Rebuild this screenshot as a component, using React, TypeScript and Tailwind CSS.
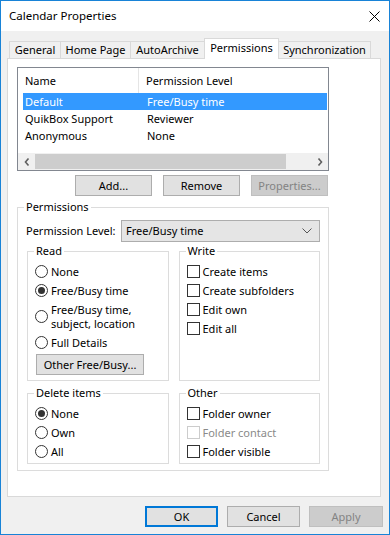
import React from 'react'

function Radio({ checked }: { checked?: boolean }) {
  return (
    <span className="w-[13px] h-[13px] rounded-full border border-[#333333] bg-white flex items-center justify-center shrink-0">
      {checked && <span className="w-[7px] h-[7px] rounded-full bg-[#333333]" />}
    </span>
  )
}

function Check({ disabled }: { disabled?: boolean }) {
  return (
    <span
      className={
        disabled
          ? 'w-[13px] h-[13px] border border-[#cccccc] bg-white shrink-0'
          : 'w-[13px] h-[13px] border border-[#333333] bg-white shrink-0'
      }
    />
  )
}

function RadioRow({ label, checked }: { label: string, checked?: boolean }) {
  return (
    <div className="h-[19px] flex items-center gap-[3px]">
      <Radio checked={checked} />
      <span>{label}</span>
    </div>
  )
}

function CheckRow({ label, disabled }: { label: string, disabled?: boolean }) {
  return (
    <div className="h-[19px] flex items-center gap-[3px]">
      <Check disabled={disabled} />
      <span className={disabled ? 'text-[#8a8a8a]' : ''}>{label}</span>
    </div>
  )
}

function Group({ title, children, className = '' }: { title: string, children: React.ReactNode, className?: string }) {
  return (
    <fieldset className={`border border-[#dcdcdc] m-0 p-0 min-w-0 ${className}`}>
      <legend className="ml-[6px] px-[2px] leading-[16px]">{title}</legend>
      {children}
    </fieldset>
  )
}

function Btn({ children, w = 'w-[77px]', disabled }: { children: React.ReactNode, w?: string, disabled?: boolean }) {
  return (
    <div
      className={
        disabled
          ? `${w} h-[21px] flex items-center justify-center bg-[#cccccc] border border-[#bfbfbf] text-[#838383]`
          : `${w} h-[21px] flex items-center justify-center bg-[#e1e1e1] border border-[#adadad]`
      }
    >
      {children}
    </div>
  )
}

const tabs = [
  { label: 'General', w: 'w-[51px]' },
  { label: 'Home Page', w: 'w-[70px]' },
  { label: 'AutoArchive', w: 'w-[74px]' },
]

export default function App() {
  return (
    <div className="w-[390px] h-[535px] border border-[#1883d7] bg-[#f0f0f0] flex flex-col font-['Noto_Sans',sans-serif] text-[11px] text-black leading-[16px]">
      {/* title bar */}
      <div className="h-[30px] bg-white flex items-center justify-between pl-[8px] pr-[9px] shrink-0">
        <span className="text-[11.5px]">Calendar Properties</span>
        <svg width="11" height="11" viewBox="0 0 11 11">
          <path d="M0.5 0.5 L10.5 10.5 M10.5 0.5 L0.5 10.5" stroke="#000" strokeWidth="1" />
        </svg>
      </div>

      <div className="flex-1 flex flex-col pl-[6px] pr-[8px] pt-[7px]">
        {/* tabs */}
        <div className="h-[20px] flex items-end ml-[2px]">
          {tabs.map(t => (
            <div key={t.label} className={`${t.w} h-[17px] border-l border-t border-[#d9d9d9] flex items-center justify-center`}>
              {t.label}
            </div>
          ))}
          <div className="w-[75px] h-[21px] -mb-px relative z-10 bg-white border-l border-t border-r border-[#d9d9d9] flex items-start justify-center pt-[1px]">
            Permissions
          </div>
          <div className="w-[92px] h-[17px] border-t border-r border-[#d9d9d9] flex items-center justify-center">
            Synchronization
          </div>
        </div>

        {/* panel */}
        <div className="h-[439px] bg-white border border-[#d9d9d9] pt-[8px] pl-[9px] flex flex-col shrink-0">
          {/* list view */}
          <div className="w-[312px] h-[104px] border border-[#828790] bg-white flex flex-col">
            <div className="h-[25px] flex items-center">
              <div className="w-[121px] h-full flex items-center pl-[7px] border-r border-[#e5e5e5]">Name</div>
              <div className="pl-[7px]">Permission Level</div>
            </div>
            <div className="flex flex-col pl-[5px] pr-[1px]">
              <div className="h-[17px] flex items-center bg-[#3399ff] text-white">
                <span className="w-[116px] pl-[2px]">Default</span>
                <span className="pl-[8px]">Free/Busy time</span>
              </div>
              <div className="h-[17px] flex items-center">
                <span className="w-[116px] pl-[2px]">QuikBox Support</span>
                <span className="pl-[8px]">Reviewer</span>
              </div>
              <div className="h-[17px] flex items-center">
                <span className="w-[116px] pl-[2px]">Anonymous</span>
                <span className="pl-[8px]">None</span>
              </div>
            </div>
            <div className="flex-1" />
            <div className="h-[17px] bg-[#f0f0f0] flex items-center">
              <div className="w-[17px] h-full flex items-center justify-center">
                <svg width="6" height="8" viewBox="0 0 6 8">
                  <path d="M4.5 0.5 L1.5 4 L4.5 7.5" stroke="#606060" strokeWidth="1.6" fill="none" />
                </svg>
              </div>
              <div className="w-[251px] h-[15px] bg-[#cdcdcd]" />
              <div className="flex-1" />
              <div className="w-[17px] h-full flex items-center justify-center">
                <svg width="6" height="8" viewBox="0 0 6 8">
                  <path d="M1.5 0.5 L4.5 4 L1.5 7.5" stroke="#606060" strokeWidth="1.6" fill="none" />
                </svg>
              </div>
            </div>
          </div>

          {/* list buttons */}
          <div className="w-[312px] mt-[4px] flex justify-end gap-[11px] pr-[1px]">
            <Btn>Add...</Btn>
            <Btn>Remove</Btn>
            <Btn disabled>Properties...</Btn>
          </div>

          {/* permissions group */}
          <Group title="Permissions" className="w-[312px] mt-[3px]">
            <div className="pl-[9px] pr-[8px] pb-[6px]">
              <div className="mt-[5px] flex items-center justify-between">
                <span className="-ml-px">Permission Level:</span>
                <div className="w-[199px] h-[22px] bg-[#e5e5e5] border border-[#adadad] flex items-center justify-between pl-[4px] pr-[7px]">
                  <span>Free/Busy time</span>
                  <svg width="10" height="6" viewBox="0 0 10 6">
                    <path d="M0.5 0.5 L5 5 L9.5 0.5" stroke="#555" strokeWidth="1" fill="none" />
                  </svg>
                </div>
              </div>

              <div className="mt-[1px] grid grid-cols-2 gap-x-[10px] gap-y-[4px]">
                <Group title="Read">
                  <div className="pl-[7px] pt-[3px] pb-[5px]">
                    <RadioRow label="None" />
                    <RadioRow label="Free/Busy time" checked />
                    <div className="h-[33px] flex items-center gap-[3px]">
                      <Radio />
                      <span className="leading-[14px]">
                        Free/Busy time,
                        <br />
                        subject, location
                      </span>
                    </div>
                    <RadioRow label="Full Details" />
                    <div className="mt-[2px] ml-px">
                      <Btn w="w-[108px]">Other Free/Busy...</Btn>
                    </div>
                  </div>
                </Group>
                <Group title="Write">
                  <div className="pl-[7px] pt-[3px]">
                    <CheckRow label="Create items" />
                    <CheckRow label="Create subfolders" />
                    <CheckRow label="Edit own" />
                    <CheckRow label="Edit all" />
                  </div>
                </Group>
                <Group title="Delete items">
                  <div className="pl-[7px] pt-[3px] pb-[2px]">
                    <RadioRow label="None" checked />
                    <RadioRow label="Own" />
                    <RadioRow label="All" />
                  </div>
                </Group>
                <Group title="Other">
                  <div className="pl-[7px] pt-[3px] pb-[2px]">
                    <CheckRow label="Folder owner" />
                    <CheckRow label="Folder contact" disabled />
                    <CheckRow label="Folder visible" />
                  </div>
                </Group>
              </div>
            </div>
          </Group>
        </div>

        {/* footer */}
        <div className="mt-[9px] -mr-[2px] flex justify-end gap-[9px]">
          <div className="w-[73px] h-[21px] flex items-center justify-center bg-[#e1e1e1] border-2 border-[#0078d7]">OK</div>
          <Btn w="w-[73px]">Cancel</Btn>
          <Btn w="w-[74px]" disabled>Apply</Btn>
        </div>
      </div>
    </div>
  )
}
